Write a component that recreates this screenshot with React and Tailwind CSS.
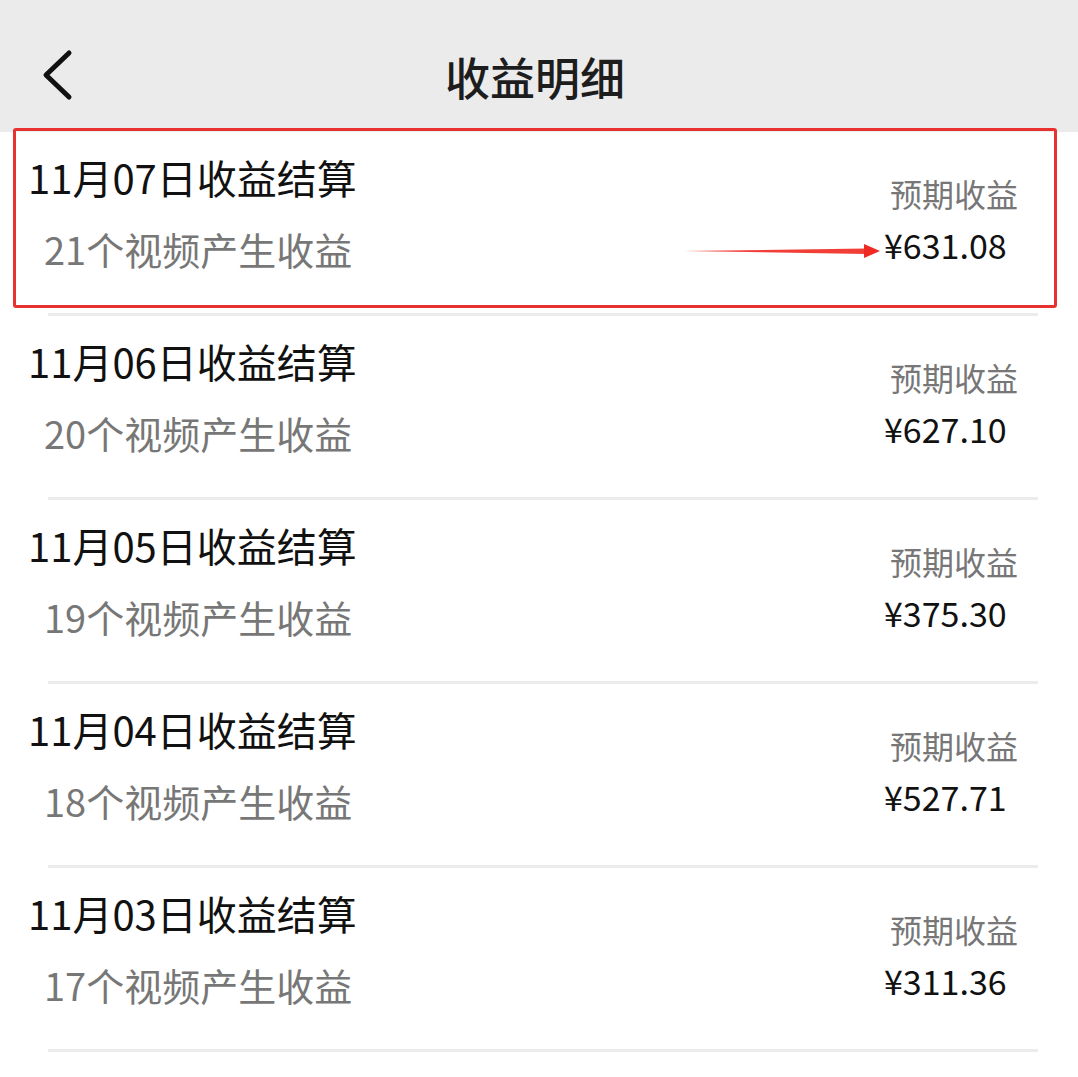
const rows = [
  { date: '11月07日收益结算', count: 21, amount: '¥631.08' },
  { date: '11月06日收益结算', count: 20, amount: '¥627.10' },
  { date: '11月05日收益结算', count: 19, amount: '¥375.30' },
  { date: '11月04日收益结算', count: 18, amount: '¥527.71' },
  { date: '11月03日收益结算', count: 17, amount: '¥311.36' },
];

function Arrow() {
  return (
    <svg width="196" height="16" viewBox="0 0 196 16" className="block">
      <polygon points="0,8 182,5.5 182,11" fill="#ef2a22" opacity="0.9" />
      <polygon points="180,1 196,8 180,15" fill="#ee2a22" />
    </svg>
  );
}

export default function App() {
  return (
    <div className="relative w-[1078px] h-[1077px] overflow-hidden bg-white font-['Noto_Sans_CJK_SC',sans-serif]">
      <header className="h-[132px] bg-[#ebebeb] relative">
        <svg width="34" height="52" viewBox="0 0 34 52" className="absolute left-[40px] top-[49px]">
          <polyline points="29,4 6,26 29,48" fill="none" stroke="#111" strokeWidth="5" strokeLinecap="round" strokeLinejoin="round" />
        </svg>
        <h1 className="absolute left-0 right-[8px] top-[49px] text-center text-[45px] leading-[56px] font-medium text-[#1d1d1d]">
          收益明细
        </h1>
      </header>

      <ul>
        {rows.map((r, i) => (
          <li key={r.date} className="h-[184px] flex flex-col">
            <div className="flex-1 flex justify-between items-start pl-[28px] pr-[60px]">
              <div className="flex flex-col pt-[19px]">
                <span className="text-[40px] leading-[52px] text-[#111]">{r.date}</span>
                <span className="text-[38px] leading-[52px] text-[#777] pl-[16px] mt-[20px]">
                  {r.count}个视频产生收益
                </span>
              </div>
              <div className="relative">
                {i === 0 && (
                  <div className="absolute right-[138px] top-[111px]">
                    <Arrow />
                  </div>
                )}
                <div className="flex flex-col pt-[39px] w-[134px]">
                  <span className="text-[32px] leading-[44px] text-[#777] pl-[6px]">预期收益</span>
                  <span className="text-[34px] leading-[44px] text-[#111] mt-[8px]">{r.amount}</span>
                </div>
              </div>
            </div>
            <div className="h-[3px] ml-[48px] mr-[40px] bg-[#ececec]" />
          </li>
        ))}
      </ul>

      <div className="absolute left-[13px] top-[128px] w-[1044px] h-[180px] border-[3px] border-[#e8322f] rounded-[3px] pointer-events-none" />
    </div>
  );
}
